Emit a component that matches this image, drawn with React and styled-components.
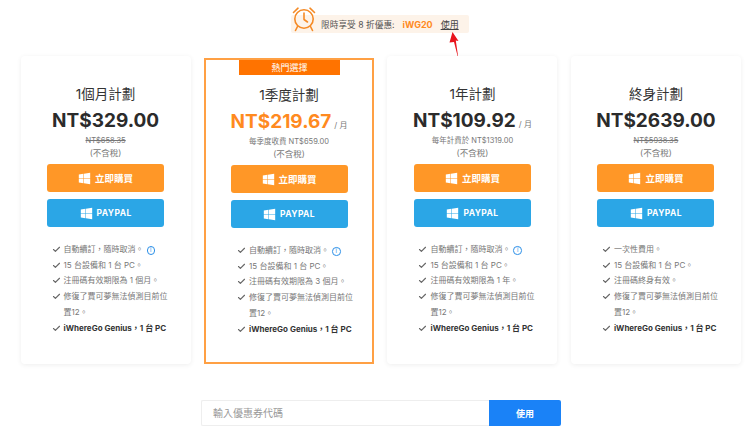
import React from 'react';
import styled, { createGlobalStyle } from 'styled-components';
import { FaWindows } from 'react-icons/fa';
import { Check } from 'lucide-react';

const GlobalStyle = createGlobalStyle`
  html, body {
    margin: 0;
    padding: 0;
    background: #fff;
    font-family: Inter, "Noto Sans CJK TC", sans-serif;
  }
  * { box-sizing: border-box; }
`;

const Page = styled.div`
  position: relative;
  width: 750px;
  height: 441px;
  overflow: hidden;
  padding-top: 15px;
`;

const PromoRow = styled.div`
  display: flex;
  justify-content: center;
  margin-left: 10px;
  height: 41px;
`;

const Promo = styled.div`
  position: relative;
  width: 178px;
  height: 18px;
  background: #fdf3e9;
  border-radius: 2px;
  display: flex;
  align-items: center;
  padding-left: 30px;
  font-size: 8.7px;
  color: #555;
  white-space: nowrap;
`;

const ClockWrap = styled.div`
  position: absolute;
  left: 1px;
  top: -9px;
  width: 24px;
  height: 26px;
`;

const PromoCode = styled.span`
  color: #ff8a1f;
  font-weight: 700;
  font-size: 9px;
  margin: 0 8px 0 8px;
`;

const PromoUse = styled.span`
  color: #444;
  text-decoration: underline;
  font-size: 9px;
`;

const ArrowWrap = styled.div`
  position: absolute;
  left: 158px;
  top: 17px;
  width: 14px;
  height: 30px;
`;

const Cards = styled.div`
  display: grid;
  grid-template-columns: repeat(4, 170px);
  column-gap: 13.45px;
  padding-left: 20.6px;
  align-items: end;
`;

const Card = styled.div`
  position: relative;
  height: ${p => (p.$featured ? '306px' : '308px')};
  background: #fff;
  border: ${p => (p.$featured ? '2px solid #ffa044' : 'none')};
  box-shadow: ${p => (p.$featured ? 'none' : '0 1px 5px rgba(0, 0, 0, 0.07)')};
  border-radius: ${p => (p.$featured ? '0' : '4px')};
  padding-top: ${p => (p.$featured ? '25px' : '28px')};
  display: flex;
  flex-direction: column;
  align-items: center;
`;

const Ribbon = styled.div`
  position: absolute;
  top: 0;
  left: 33px;
  width: 101px;
  height: 15px;
  background: #ff7300;
  color: #fff;
  font-size: 9px;
  line-height: 15px;
  text-align: center;
`;

const Title = styled.div`
  font-size: 13.5px;
  line-height: 20px;
  color: #333;
`;

const PriceRow = styled.div`
  display: flex;
  align-items: baseline;
  margin-top: 4px;
  height: 26px;
  white-space: nowrap;
`;

const Price = styled.span`
  font-size: 19px;
  line-height: 26px;
  font-weight: 700;
  color: ${p => (p.$featured ? '#ff8a1f' : '#2b2b2b')};
`;

const PerMonth = styled.span`
  font-size: 8px;
  color: #777;
  margin-left: 3px;
`;

const Note = styled.div`
  font-size: ${p => (p.$tax ? '8.5px' : '7.5px')};
  line-height: 13px;
  color: #777;
  white-space: nowrap;
  text-decoration: ${p => (p.$strike ? 'line-through' : 'none')};
`;

const Notes = styled.div`
  margin-bottom: 4px;
  display: flex;
  flex-direction: column;
  align-items: center;
`;

const BuyButton = styled.button`
  width: 117px;
  height: 28px;
  border: none;
  border-radius: 3px;
  margin-bottom: 7px;
  padding: 0;
  display: flex;
  align-items: center;
  justify-content: center;
  gap: 4px;
  background: ${p => (p.$paypal ? '#2ba6e6' : '#ff9727')};
  color: #fff;
  font-family: inherit;
  font-size: ${p => (p.$paypal ? '8.5px' : '9.5px')};
  font-weight: 700;
  letter-spacing: ${p => (p.$paypal ? '0.4px' : '0')};
  svg {
    width: 13px;
    height: 13px;
  }
`;

const Features = styled.ul`
  list-style: none;
  margin: 8px 0 0;
  padding: 0 0 0 32px;
  width: 100%;
`;

const Feature = styled.li`
  position: relative;
  padding-left: 11px;
  width: 118px;
  font-size: 8px;
  line-height: 15.7px;
  color: ${p => (p.$bold ? '#333' : '#777')};
  font-weight: ${p => (p.$bold ? 700 : 400)};
  white-space: ${p => (p.$bold ? 'nowrap' : 'normal')};
  svg {
    position: absolute;
    left: -1px;
    top: 3px;
    width: 9px;
    height: 9px;
    color: #666;
  }
`;

const InfoDot = styled.span`
  display: inline-block;
  width: 8.5px;
  height: 8.5px;
  margin-left: 3px;
  border: 1px solid #2b8fe8;
  border-radius: 50%;
  color: #2b8fe8;
  font-size: 6px;
  line-height: 6.5px;
  text-align: center;
  vertical-align: 0;
`;

const CouponRow = styled.div`
  display: flex;
  margin: 36px 0 0 201px;
  width: 360px;
  height: 26px;
`;

const CouponInput = styled.div`
  flex: 1;
  border: 1px solid #eee;
  border-right: none;
  border-radius: 2px 0 0 2px;
  padding-left: 11px;
  font-size: 10px;
  line-height: 24px;
  color: #999;
`;

const CouponButton = styled.button`
  width: 72px;
  border: none;
  border-radius: 0 2px 2px 0;
  background: #1a82f7;
  color: #fff;
  font-family: inherit;
  font-size: 9px;
  font-weight: 700;
  padding: 0;
`;

const plans = [
  {
    title: '1個月計劃',
    price: 'NT$329.00',
    note: 'NT$658.35',
    strike: true,
    features: ['自動續訂，隨時取消。', '15 台設備和 1 台 PC。', '注冊碼有效期限為 1 個月。', '修復了賈可夢無法偵測目前位置12。'],
  },
  {
    title: '1季度計劃',
    price: 'NT$219.67',
    perMonth: true,
    featured: true,
    note: '每季度收費 NT$659.00',
    features: ['自動續訂，隨時取消。', '15 台設備和 1 台 PC。', '注冊碼有效期限為 3 個月。', '修復了賈可夢無法偵測目前位置12。'],
  },
  {
    title: '1年計劃',
    price: 'NT$109.92',
    perMonth: true,
    note: '每年計費於 NT$1319.00',
    features: ['自動續訂，隨時取消。', '15 台設備和 1 台 PC。', '注冊碼有效期限為 1 年。', '修復了賈可夢無法偵測目前位置12。'],
  },
  {
    title: '終身計劃',
    price: 'NT$2639.00',
    note: 'NT$5938.35',
    strike: true,
    features: ['一次性費用。', '15 台設備和 1 台 PC。', '注冊碼終身有效。', '修復了賈可夢無法偵測目前位置12。'],
  },
];

function AlarmClock() {
  return (
    <svg viewBox="0 0 24 26" width="24" height="26" fill="none" stroke="#f58a25" strokeWidth="1.6" strokeLinecap="round" strokeLinejoin="round">
      <circle cx="12" cy="13" r="9.2" />
      <path d="M12 7v6.5l3.5 2.5" />
      <path d="M1.5 6.5 6 2.2M22.5 6.5 18 2.2" />
      <path d="M5.5 20.5 3.5 24.5M18.5 20.5l2 4" />
    </svg>
  );
}

function RedArrow() {
  return (
    <svg viewBox="0 0 14 30" width="14" height="30">
      <path d="M3.5 0 9.5 9 6.8 8.6 9.6 28 5 10 0.5 10.5Z" fill="#e8141c" />
    </svg>
  );
}

function PlanCard({ plan }) {
  return (
    <Card $featured={plan.featured}>
      {plan.featured && <Ribbon>熱門選擇</Ribbon>}
      <Title>{plan.title}</Title>
      <PriceRow>
        <Price $featured={plan.featured}>{plan.price}</Price>
        {plan.perMonth && <PerMonth>/ 月</PerMonth>}
      </PriceRow>
      <Notes>
        <Note $strike={plan.strike}>{plan.note}</Note>
        <Note $tax>(不含稅)</Note>
      </Notes>
      <BuyButton><FaWindows />立即購買</BuyButton>
      <BuyButton $paypal><FaWindows />PAYPAL</BuyButton>
      <Features>
        {plan.features.map((text, i) => (
          <Feature key={i}>
            <Check strokeWidth={3} />
            {text}
            {text.startsWith('自動') && <InfoDot>i</InfoDot>}
          </Feature>
        ))}
        <Feature $bold>
          <Check strokeWidth={3} />
          iWhereGo Genius，1 台 PC
        </Feature>
      </Features>
    </Card>
  );
}

export default function App() {
  return (
    <Page>
      <GlobalStyle />
      <PromoRow>
        <Promo>
          <ClockWrap><AlarmClock /></ClockWrap>
          限時享受 8 折優惠:
          <PromoCode>iWG20</PromoCode>
          <PromoUse>使用</PromoUse>
          <ArrowWrap><RedArrow /></ArrowWrap>
        </Promo>
      </PromoRow>
      <Cards>
        {plans.map(plan => <PlanCard key={plan.title} plan={plan} />)}
      </Cards>
      <CouponRow>
        <CouponInput>輸入優惠券代碼</CouponInput>
        <CouponButton>使用</CouponButton>
      </CouponRow>
    </Page>
  );
}
